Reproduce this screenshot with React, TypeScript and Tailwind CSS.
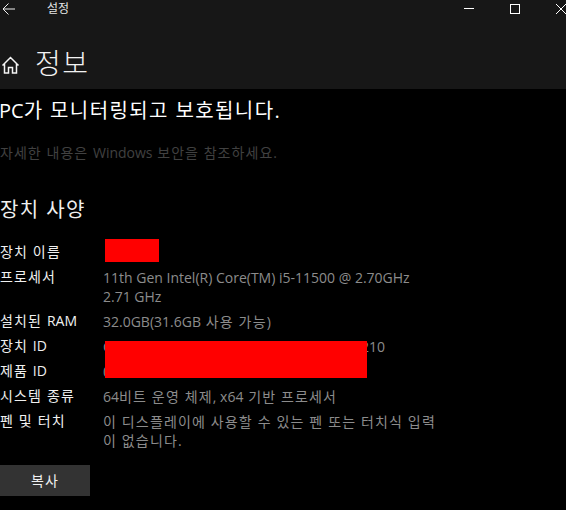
import React from 'react';

const font = "font-['Open_Sans','Noto_Sans_CJK_KR',sans-serif]";

const specs = [
  { label: '장치 이름', lines: ['\u00A0'] },
  { label: '프로세서', lines: ['11th Gen Intel(R) Core(TM) i5-11500 @ 2.70GHz', '2.71 GHz'] },
  { label: '설치된 RAM', lines: ['32.0GB(31.6GB 사용 가능)'] },
  { label: '장치 ID', lines: ['C'] },
  { label: '제품 ID', lines: ['0'] },
  { label: '시스템 종류', lines: ['64비트 운영 체제, x64 기반 프로세서'] },
  { label: '펜 및 터치', lines: ['이 디스플레이에 사용할 수 있는 펜 또는 터치식 입력', '이 없습니다.'] },
];

// Hangul runs need extra spacing, the latin glyphs don't
const Ko = ({ text, wide, tight }: { text: string; wide?: boolean; tight?: boolean }) => (
  <>
    {text.split(/([가-힣 ]+)/).map((part, i) =>
      /[가-힣]/.test(part) ? (
        <span key={i} className={wide ? 'tracking-[1.4px]' : tight ? 'tracking-[1.05px]' : 'tracking-[1.15px]'}>{part}</span>
      ) : (
        <span key={i}>{part}</span>
      ),
    )}
  </>
);

const App: React.FC = () => {
  return (
    <div className={`relative h-[510px] w-[566px] overflow-hidden bg-black text-white ${font}`}>
      <header className="h-[89px] bg-[#171717]">
        <div className="flex h-[17px] items-center">
          <svg className="ml-[2px] h-[12px] w-[13px]" viewBox="0 0 13 12" fill="none" stroke="#f0f0f0" strokeWidth="1">
            <path d="M13 6H1M6.5 .5L1 6l5.5 5.5" />
          </svg>
          <span className="ml-[32px] text-[12px] leading-[17px] text-[#e4e4e4]">설정</span>
          <div className="ml-auto flex items-center">
            <span className="block h-px w-[10px] bg-white" />
            <span className="ml-[36px] block h-[10px] w-[10px] border border-white" />
            <svg className="ml-[36px] h-[10px] w-[10px]" viewBox="0 0 10 10" stroke="#fff" strokeWidth="1">
              <path d="M0 0l10 10M10 0L0 10" />
            </svg>
          </div>
        </div>
        <div className="mt-[26px] flex h-[40px] items-center">
          <svg className="ml-[1px] mt-[4px] h-[18px] w-[19px]" viewBox="0 0 19 18" fill="none" stroke="#f4f4f4" strokeWidth="1.5">
            <path d="M1.5 9.5L9.5 1.5l8 8M3.5 7.5V17h4v-5.5h4V17h4V7.5" />
          </svg>
          <h1 className="ml-[15px] text-[28px] font-light leading-[40px] tracking-[1.5px] text-[#f2f2f2]">정보</h1>
        </div>
      </header>

      <h2 className="-ml-[1px] mt-[10px] text-[20px] font-normal leading-[24px] whitespace-nowrap">
        <Ko text="PC가 모니터링되고 보호됩니다." wide />
      </h2>
      <p className="mt-[20px] text-[14px] leading-[20px] whitespace-nowrap text-[#414141]">
        <Ko text="자세한 내용은 Windows 보안을 참조하세요." tight />
      </p>
      <h3 className="mt-[35px] text-[20px] font-normal leading-[24px] text-[#f0f0f0]">
        <Ko text="장치 사양" wide />
      </h3>

      <dl className="mt-[21px] flex flex-col gap-[6px] text-[14px] leading-[19px]">
        {specs.map((row) => (
          <div key={row.label} className="flex">
            <dt className="w-[103px] shrink-0 whitespace-nowrap leading-[17px] text-[#f0f0f0]"><Ko text={row.label} /></dt>
            <dd className="text-[#8c8c8c]">
              {row.lines.map((line) => (
                <div key={line} className="whitespace-pre"><Ko text={line} /></div>
              ))}
            </dd>
          </div>
        ))}
      </dl>

      <span className="absolute left-[361px] top-[337px] text-[14px] leading-[19px] text-[#8c8c8c]">210</span>
      <div className="absolute left-[105px] top-[239px] h-[23px] w-[54px] bg-[#ff0000]" />
      <div className="absolute left-[105px] top-[341px] h-[37px] w-[262px] bg-[#ff0000]" />

      <button className="absolute left-0 top-[465px] h-[31px] w-[90px] bg-[#333333] text-[14px] text-[#f0f0f0]">
        <Ko text="복사" />
      </button>
    </div>
  );
};

export default App;
